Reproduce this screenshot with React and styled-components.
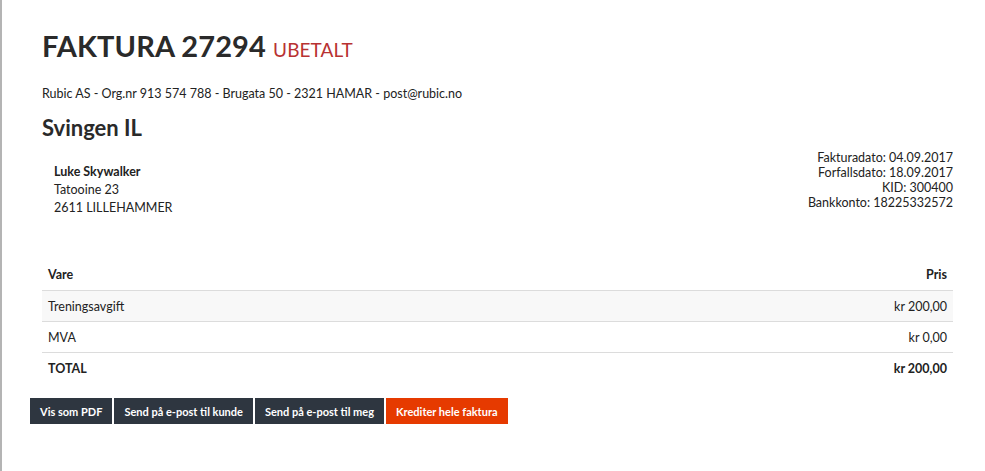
import React from "react";
import styled, { createGlobalStyle } from "styled-components";

const GlobalStyle = createGlobalStyle`
    html, body {
        margin: 0;
        padding: 0;
        background: #ffffff;
    }
    body {
        font-family: "Lato", "Liberation Sans", sans-serif;
        color: #222;
        border-left: 2px solid #b4b4b4;
        min-height: 471px;
        box-sizing: border-box;
    }
`;

const lines = [
    { name: "Treningsavgift", price: "kr 200,00", shaded: true },
    { name: "MVA", price: "kr 0,00" },
];

const meta = [
    "Fakturadato: 04.09.2017",
    "Forfallsdato: 18.09.2017",
    "KID: 300400",
    "Bankkonto: 18225332572",
];

function App() {
    return (
        <>
            <GlobalStyle />
            <Page>
                <Title>
                    FAKTURA 27294 <Status>UBETALT</Status>
                </Title>
                <Company>
                    Rubic AS - Org.nr 913 574 788 - Brugata 50 - 2321 HAMAR - post@rubic.no
                </Company>
                <Customer>Svingen IL</Customer>
                <InfoRow>
                    <Address>
                        <strong>Luke Skywalker</strong>
                        <span>Tatooine 23</span>
                        <span>2611 LILLEHAMMER</span>
                    </Address>
                    <Meta>
                        {meta.map((m) => (
                            <span key={m}>{m}</span>
                        ))}
                    </Meta>
                </InfoRow>
                <Table>
                    <thead>
                        <tr>
                            <Th>Vare</Th>
                            <Th right>Pris</Th>
                        </tr>
                    </thead>
                    <tbody>
                        {lines.map((l) => (
                            <Row key={l.name} shaded={l.shaded}>
                                <Td>{l.name}</Td>
                                <Td right>{l.price}</Td>
                            </Row>
                        ))}
                        <Row>
                            <Td bold>TOTAL</Td>
                            <Td right bold>
                                kr 200,00
                            </Td>
                        </Row>
                    </tbody>
                </Table>
                <Actions>
                    <Button>Vis som PDF</Button>
                    <Button>Send på e-post til kunde</Button>
                    <Button>Send på e-post til meg</Button>
                    <Button danger>Krediter hele faktura</Button>
                </Actions>
            </Page>
        </>
    );
}

const Page = styled.div`
    padding: 28px 32px 40px 40px;
`;

const Title = styled.h1`
    font-size: 29px;
    font-weight: 700;
    color: #2a2a2a;
    margin: 0;
    line-height: 36px;
    letter-spacing: 0.1px;
`;

const Status = styled.span`
    font-size: 19px;
    font-weight: 400;
    color: #b83232;
`;

const Company = styled.p`
    font-size: 12.5px;
    margin: 18px 0 0 0;
    line-height: 16px;
    color: #222;
`;

const Customer = styled.h2`
    font-size: 22px;
    font-weight: 700;
    color: #2a2a2a;
    margin: 12px 0 0 0;
    line-height: 28px;
`;

const InfoRow = styled.div`
    display: flex;
    justify-content: space-between;
    align-items: flex-start;
    margin-top: 8px;
`;

const Address = styled.div`
    display: flex;
    flex-direction: column;
    padding: 13px 0 0 12px;
    font-size: 12.5px;
    line-height: 18px;

    strong {
        font-weight: 700;
    }
`;

const Meta = styled.div`
    display: flex;
    flex-direction: column;
    align-items: flex-end;
    font-size: 12.5px;
    line-height: 15px;
`;

const Table = styled.table`
    width: 100%;
    border-collapse: collapse;
    margin-top: 42px;
    font-size: 12.5px;
`;

const Th = styled.th`
    text-align: ${(p) => (p.right ? "right" : "left")};
    font-weight: 700;
    padding: 8px 6px;
    height: 15px;
    border-bottom: 1px solid #dcdcdc;
`;

const Row = styled.tr`
    background: ${(p) => (p.shaded ? "#f8f8f8" : "transparent")};
    border-bottom: 1px solid #dcdcdc;

    &:last-child {
        border-bottom: none;
    }
`;

const Td = styled.td`
    text-align: ${(p) => (p.right ? "right" : "left")};
    font-weight: ${(p) => (p.bold ? 700 : 400)};
    padding: 0 6px;
    height: 30px;
`;

const Actions = styled.div`
    display: flex;
    gap: 2px;
    margin: 15px 0 0 -12px;
`;

const Button = styled.button`
    border: none;
    background: ${(p) => (p.danger ? "#e63a00" : "#2e3640")};
    color: #fff;
    font-family: "Lato", "Liberation Sans", sans-serif;
    font-size: 11px;
    font-weight: 700;
    height: 26px;
    padding: 0 10px;
    cursor: pointer;
`;

export default App;
